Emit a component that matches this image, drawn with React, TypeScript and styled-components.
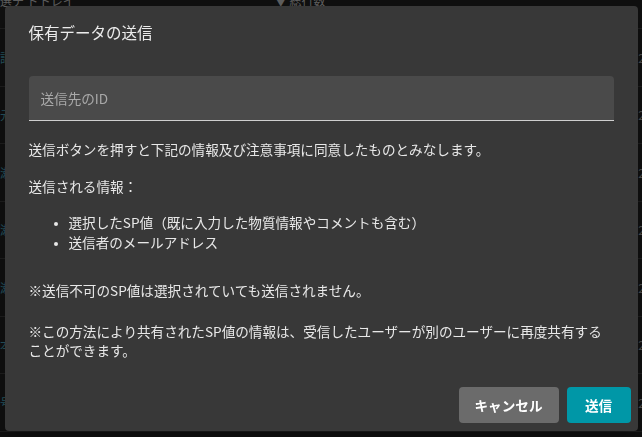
import React from 'react';
import styled, { createGlobalStyle } from 'styled-components';

const GlobalStyle = createGlobalStyle`
  html, body {
    margin: 0;
    padding: 0;
    background: #111111;
    font-family: "Noto Sans CJK JP", "Noto Sans", sans-serif;
  }
  #root {
    width: 642px;
    height: 437px;
    overflow: hidden;
  }
`;

const Page = styled.div`
  width: 642px;
  height: 437px;
  background: #1f1f1f;
  overflow: hidden;
`;

const TableHeader = styled.div`
  height: 34px;
  margin-top: -6px;
  display: flex;
  align-items: flex-start;
  gap: 200px;
  color: #bbbbbb;
  font-size: 12px;
  line-height: 14px;
  border-bottom: 1px solid #3c3c3c;
`;

const HeaderCell = styled.span`
  white-space: nowrap;
`;

const TableRow = styled.div`
  height: 56.5px;
  border-bottom: 1px solid #3c3c3c;
  display: flex;
  align-items: center;
  justify-content: space-between;
  color: #4aa3b8;
  font-size: 12px;
`;

const RowEnd = styled.span`
  color: #9a9a9a;
  margin-right: -3px;
`;

const Backdrop = styled.div`
  position: fixed;
  inset: 0;
  background: rgba(0, 0, 0, 0.5);
  display: flex;
  align-items: center;
  justify-content: center;
`;

const Dialog = styled.div`
  width: 633px;
  height: 425px;
  box-sizing: border-box;
  background: #383838;
  border-radius: 4px;
  box-shadow: 0 11px 15px -7px rgba(0, 0, 0, 0.2), 0 24px 38px 3px rgba(0, 0, 0, 0.14);
  display: flex;
  flex-direction: column;
  color: #e8e8e8;
`;

const Title = styled.h2`
  margin: 0;
  padding: 16px 24px 0;
  font-size: 15.5px;
  line-height: 20px;
  font-weight: 400;
  color: #ececec;
`;

const Content = styled.div`
  flex: 1;
  padding: 34px 24px 0;
  font-size: 13.6px;
  line-height: 20px;
`;

const Field = styled.div`
  height: 44px;
  background: #4a4a4a;
  border-radius: 4px 4px 0 0;
  border-bottom: 1px solid #cfcfcf;
  display: flex;
  align-items: center;
  padding: 0 12px;
`;

const FieldInput = styled.input`
  flex: 1;
  background: transparent;
  border: none;
  outline: none;
  color: #e8e8e8;
  font: inherit;
  font-size: 13.6px;
  padding: 0;
  &::placeholder {
    color: #a9a9a9;
  }
`;

const Para = styled.p<{ $top: number }>`
  margin: ${({ $top }) => $top}px 0 0;
`;

const NoteText = styled.p`
  margin: 22px 0 0;
  line-height: 19px;
`;

const List = styled.ul`
  margin: 16px 0 0;
  padding-left: 40px;
  li::marker {
    font-size: 11px;
  }
`;

const Actions = styled.div`
  display: flex;
  justify-content: flex-end;
  gap: 8px;
  padding: 8px 7px 8px;
`;

const Button = styled.button<{ $primary?: boolean }>`
  height: 36px;
  min-width: 64px;
  padding: 0 16px;
  border: none;
  border-radius: 4px;
  background: ${({ $primary }) => ($primary ? '#0097a7' : '#6b6b6b')};
  color: #ffffff;
  font-family: inherit;
  font-size: 13.6px;
  font-weight: 700;
  cursor: pointer;
`;

const rows = ['語', '元', '瀬', '瀬', '瀬', '本', '号'];

export default function App() {
  return (
    <>
      <GlobalStyle />
      <Page>
        <TableHeader>
          <HeaderCell>選テ ドトレイ</HeaderCell>
          <HeaderCell>▼ 総行数</HeaderCell>
        </TableHeader>
        {rows.map((r, i) => (
          <TableRow key={i}>
            <span>{r}</span>
            <RowEnd>2</RowEnd>
          </TableRow>
        ))}
      </Page>
      <Backdrop>
        <Dialog>
          <Title>保有データの送信</Title>
          <Content>
            <Field>
              <FieldInput placeholder="送信先のID" />
            </Field>
            <Para $top={18}>送信ボタンを押すと下記の情報及び注意事項に同意したものとみなします。</Para>
            <Para $top={17}>送信される情報：</Para>
            <List>
              <li>選択したSP値（既に入力した物質情報やコメントも含む）</li>
              <li>送信者のメールアドレス</li>
            </List>
            <Para $top={28}>※送信不可のSP値は選択されていても送信されません。</Para>
            <NoteText>
              ※この方法により共有されたSP値の情報は、受信したユーザーが別のユーザーに再度共有する
              <br />
              ことができます。
            </NoteText>
          </Content>
          <Actions>
            <Button>キャンセル</Button>
            <Button $primary>送信</Button>
          </Actions>
        </Dialog>
      </Backdrop>
    </>
  );
}
